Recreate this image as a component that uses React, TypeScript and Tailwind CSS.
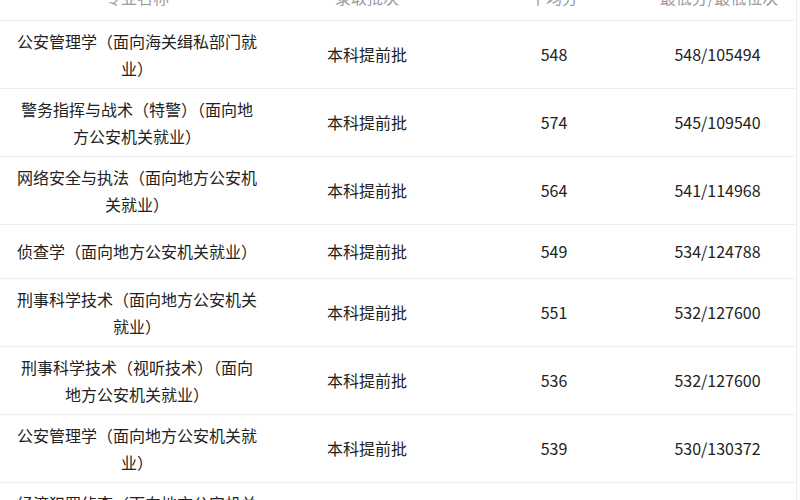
import React from "react";

interface Row {
  major: string;
  batch: string;
  avg: string;
  low: string;
}

const rows: Row[] = [
  { major: "公安管理学（面向海关缉私部门就业）", batch: "本科提前批", avg: "548", low: "548/105494" },
  { major: "警务指挥与战术（特警）（面向地方公安机关就业）", batch: "本科提前批", avg: "574", low: "545/109540" },
  { major: "网络安全与执法（面向地方公安机关就业）", batch: "本科提前批", avg: "564", low: "541/114968" },
  { major: "侦查学（面向地方公安机关就业）", batch: "本科提前批", avg: "549", low: "534/124788" },
  { major: "刑事科学技术（面向地方公安机关就业）", batch: "本科提前批", avg: "551", low: "532/127600" },
  { major: "刑事科学技术（视听技术）（面向地方公安机关就业）", batch: "本科提前批", avg: "536", low: "532/127600" },
  { major: "公安管理学（面向地方公安机关就业）", batch: "本科提前批", avg: "539", low: "530/130372" },
  { major: "经济犯罪侦查（面向地方公安机关就业）", batch: "本科提前批", avg: "535", low: "528/133581" },
];

const grid = "grid grid-cols-[274px_186px_188px_1fr] items-center";

export default function App() {
  return (
    <div
      className="w-[800px] h-[500px] overflow-hidden bg-white"
      style={{ fontFamily: '"Noto Sans CJK SC", "Noto Sans", sans-serif' }}
    >
      <div className="w-[797px] border-r border-[#ececec] -mt-[27px]">
        {/* Header (cut off at top) */}
        <div className={`${grid} h-[48px] border-b border-[#eeeeee] text-[16px] text-[#9a9a9a]`}>
          <div className="text-center px-4">专业名称</div>
          <div className="text-center">录取批次</div>
          <div className="text-center">平均分</div>
          <div className="text-center pr-[6px]">最低分/最低位次</div>
        </div>

        {rows.map((r, i) => (
          <div
            key={i}
            className={`${grid} min-h-[54px] py-[6.5px] border-b border-[#eeeeee] text-[16px] leading-[27px] text-[#222222]`}
          >
            <div className="text-center px-4">{r.major}</div>
            <div className="text-center">{r.batch}</div>
            <div className="text-center">{r.avg}</div>
            <div className="text-center pr-[9px]">{r.low}</div>
          </div>
        ))}
      </div>
    </div>
  );
}
